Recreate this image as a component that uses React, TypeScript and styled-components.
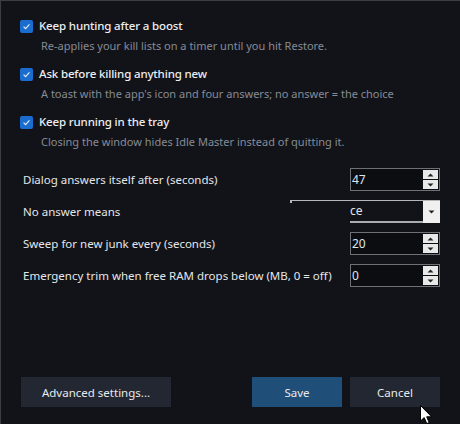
import styled, { createGlobalStyle } from 'styled-components'

const GlobalStyle = createGlobalStyle`
	html, body {
		margin: 0;
		padding: 0;
		background: #121318;
	}
	* {
		box-sizing: border-box;
	}
`

const options = [
	{ title: 'Keep hunting after a boost', desc: 'Re-applies your kill lists on a timer until you hit Restore.' },
	{ title: 'Ask before killing anything new', desc: "A toast with the app's icon and four answers; no answer = the choice" },
	{ title: 'Keep running in the tray', desc: 'Closing the window hides Idle Master instead of quitting it.' },
]

const CheckMark = () => (
	<svg width="9" height="9" viewBox="0 0 9 9">
		<path d="M1.6 4.7 L3.6 6.6 L7.4 2.4" fill="none" stroke="#e8f1fc" strokeWidth="1.1" />
	</svg>
)

const DownArrow = () => (
	<svg width="7" height="4" viewBox="0 0 7 4"><path d="M0.5 0.5 L3.5 3.5 L6.5 0.5 Z" fill="#222" /></svg>
)

const SpinArrows = () => (
	<Spin>
		<SpinButton>
			<svg width="7" height="4" viewBox="0 0 7 4"><path d="M0.5 3.5 L3.5 0.5 L6.5 3.5 Z" fill="#222" /></svg>
		</SpinButton>
		<SpinButton>
			<DownArrow />
		</SpinButton>
	</Spin>
)

const NumberField = ({ value }: { value: string }) => (
	<NumberBox>
		<NumberText>{value}</NumberText>
		<SpinArrows />
	</NumberBox>
)

const App = () => {
	return (
		<>
			<GlobalStyle />
			<Window>
				<OptionList>
					{options.map(o => (
						<Option key={o.title}>
							<Check>
								<CheckMark />
							</Check>
							<OptionTitle>{o.title}</OptionTitle>
							<OptionDesc>{o.desc}</OptionDesc>
						</Option>
					))}
				</OptionList>

				<Fields>
					<FieldLabel>Dialog answers itself after (seconds)</FieldLabel>
					<NumberField value="47" />
					<FieldLabel>No answer means</FieldLabel>
					<Combo>
						<ComboText>ce</ComboText>
						<ComboButton>
							<DownArrow />
						</ComboButton>
					</Combo>
					<FieldLabel>Sweep for new junk every (seconds)</FieldLabel>
					<NumberField value="20" />
					<FieldLabel>Emergency trim when free RAM drops below (MB, 0 = off)</FieldLabel>
					<NumberField value="0" />
				</Fields>

				<Footer>
					<Button $wide>Advanced settings...</Button>
					<FooterRight>
						<Button $primary>Save</Button>
						<Button>Cancel</Button>
					</FooterRight>
				</Footer>

				<Cursor width="13" height="20" viewBox="0 0 13 20">
					<path d="M0.5 0.5 L0.5 16 L4.2 12.6 L6.8 18.6 L9.2 17.6 L6.7 11.8 L11.6 11.8 Z" fill="#fff" stroke="#000" strokeWidth="1" />
				</Cursor>
			</Window>
		</>
	)
}

const Window = styled.div`
	position: relative;
	width: 460px;
	height: 424px;
	background-color: #121318;
	border-top: 1px solid #3c3d42;
	border-left: 1px solid #3c3d42;
	padding: 0 20px 0 19px;
	display: flex;
	flex-direction: column;
	font-family: 'Noto Sans', 'Open Sans', sans-serif;
	overflow: hidden;
`

const OptionList = styled.div`
	display: flex;
	flex-direction: column;
	gap: 13px;
	margin-top: 17px;
`

const Option = styled.div`
	display: grid;
	grid-template-columns: 13px 1fr;
	column-gap: 6px;
	row-gap: 4px;
	align-items: center;
`

const Check = styled.span`
	width: 13px;
	height: 13px;
	border-radius: 2px;
	background-color: #1b6ccf;
	display: flex;
	align-items: center;
	justify-content: center;
`

const OptionTitle = styled.span`
	color: #eceef2;
	font-size: 11.5px;
	font-weight: 500;
	letter-spacing: -0.15px;
	line-height: 16px;
`

const OptionDesc = styled.span`
	grid-column: 2;
	padding-left: 2px;
	color: #858b96;
	font-size: 11px;
	line-height: 15px;
`

const Fields = styled.div`
	display: grid;
	grid-template-columns: 1fr 90px;
	grid-auto-rows: 23px;
	row-gap: 9px;
	align-items: center;
	margin-top: 19px;
`

const FieldLabel = styled.span`
	padding-left: 3px;
	color: #e4e6ea;
	font-size: 11.5px;
`

const NumberBox = styled.div`
	height: 23px;
	display: flex;
	align-items: stretch;
	background-color: #0c0d10;
	border: 1px solid #6e7075;
	padding: 1px;
`

const NumberText = styled.span`
	flex: 1;
	color: #dde6f2;
	font-size: 12px;
	line-height: 19px;
`

const Spin = styled.div`
	width: 15px;
	display: flex;
	flex-direction: column;
	gap: 1px;
`

const SpinButton = styled.span`
	flex: 1;
	background-color: #e8e8e8;
	display: flex;
	align-items: center;
	justify-content: center;
`

const Combo = styled.div`
	position: relative;
	height: 23px;
	display: flex;
	align-items: stretch;
	border-top: 1px solid #b4b6ba;
	border-bottom: 2px solid #a9abaf;

	&::before {
		content: '';
		position: absolute;
		top: -1px;
		left: -60px;
		width: 60px;
		height: 1px;
		background-color: #b4b6ba;
	}

	&::after {
		content: '';
		position: absolute;
		top: -1px;
		left: -60px;
		width: 2px;
		height: 3px;
		background-color: #b4b6ba;
	}
`

const ComboText = styled.span`
	flex: 1;
	color: #e4e6ea;
	font-size: 12px;
	line-height: 20px;
`

const ComboButton = styled.span`
	width: 17px;
	margin-bottom: -2px;
	background-color: #f0f0f0;
	display: flex;
	align-items: center;
	justify-content: center;
`

const Footer = styled.div`
	margin-top: auto;
	margin-bottom: 17px;
	display: flex;
	align-items: center;
	justify-content: space-between;
`

const FooterRight = styled.div`
	display: flex;
	gap: 8px;
`

const Button = styled.button<{ $primary?: boolean; $wide?: boolean }>`
	height: 30px;
	width: ${props => (props.$wide ? '150px' : '90px')};
	padding: 0;
	margin-left: ${props => (props.$wide ? '1px' : '0')};
	border: none;
	border-radius: 0;
	background-color: ${props => (props.$primary ? '#1f4e79' : '#232731')};
	color: #e8eaee;
	font-family: inherit;
	font-size: 11.5px;
	cursor: default;
`

const Cursor = styled.svg`
	position: absolute;
	left: 419px;
	top: 404px;
`

export default App
